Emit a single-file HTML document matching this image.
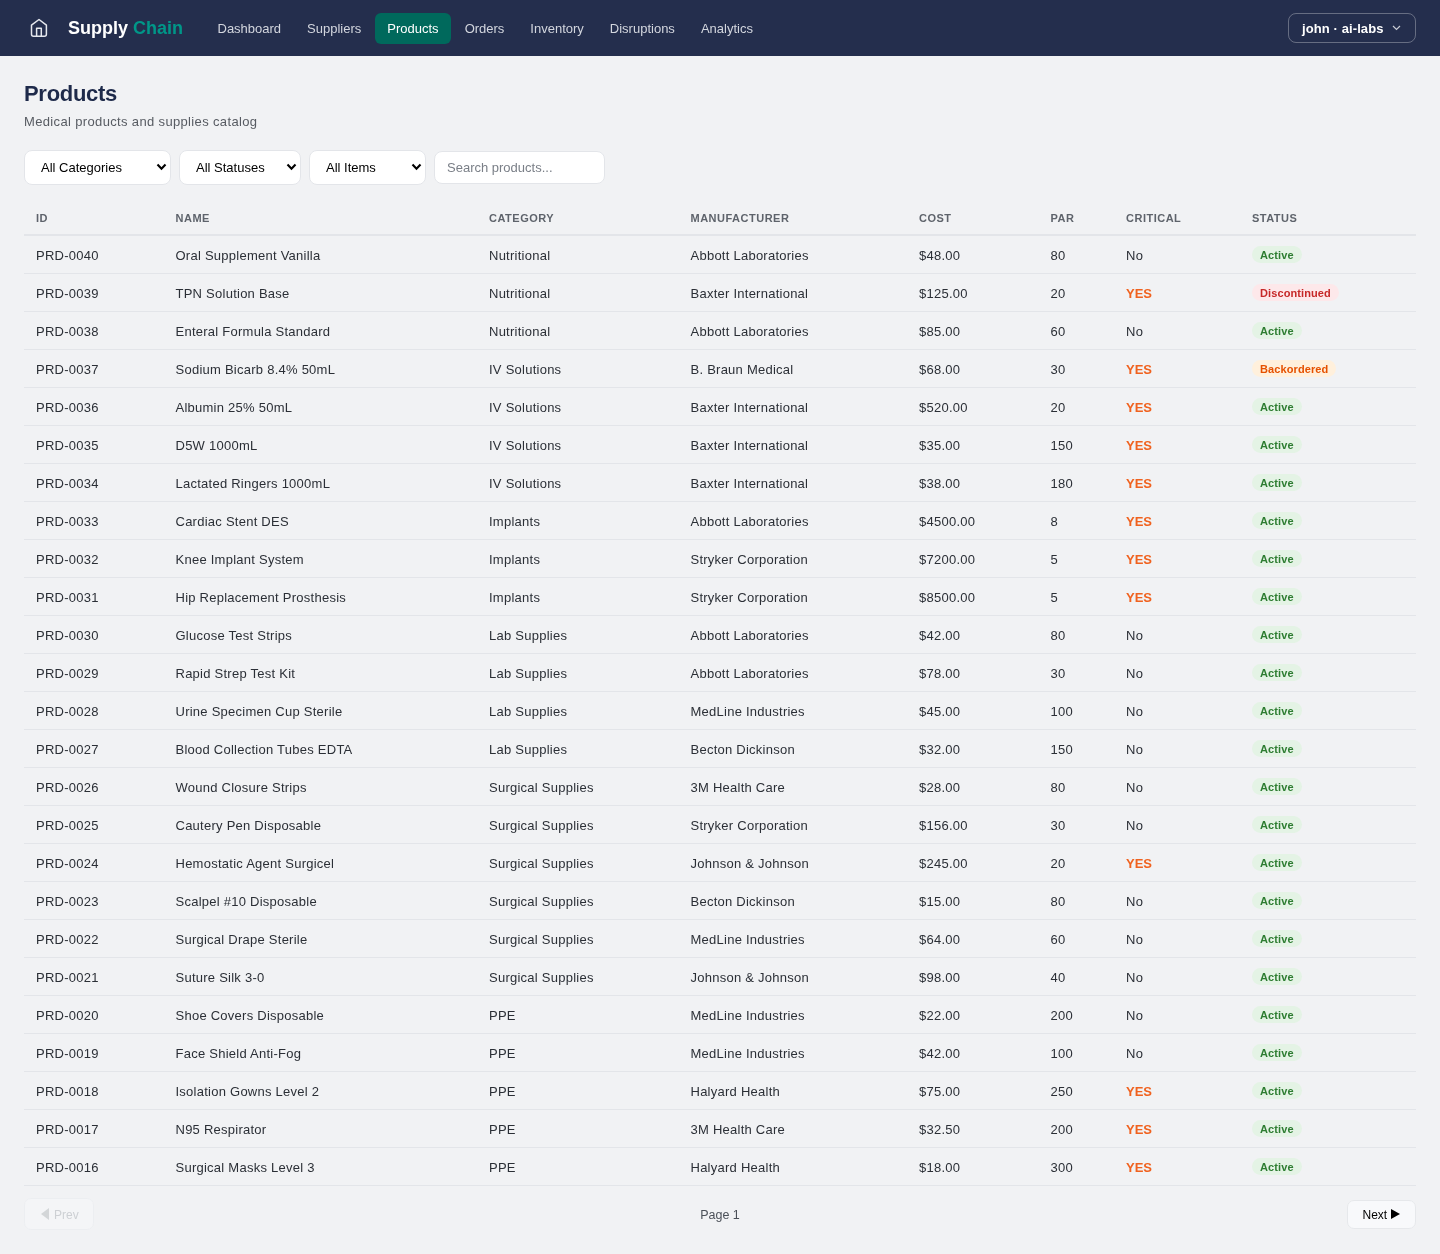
<!DOCTYPE html>
<html><head><meta charset="utf-8"><title>Products</title>
<style>
*{box-sizing:border-box;margin:0;padding:0}
html,body{width:1440px;height:1254px;overflow:hidden}
body{background:#f1f2f4;font-family:"Liberation Sans",sans-serif;color:#2b2f36;position:relative}
.nav{position:absolute;left:0;top:0;width:1440px;height:56px;background:#242e4d}
.home{position:absolute;left:26px;top:14px;width:26px;height:28px}
.logo{position:absolute;left:68px;top:17px;font-size:18px;font-weight:bold;color:#fff;line-height:22px;white-space:nowrap}
.logo span{color:#009688}
.links{position:absolute;left:205px;top:13px;display:flex;gap:1px}
.links a{display:block;height:31px;line-height:31px;padding:0 12.5px;font-size:13px;color:#d3d6de;text-decoration:none;border-radius:6px;white-space:nowrap}
.links a.on{background:#00695c;color:#fff}
.user{position:absolute;left:1288px;top:13px;width:128px;height:30px;border:1px solid rgba(255,255,255,0.3);border-radius:8px;color:#fff;font-size:13px;font-weight:bold;line-height:29px;padding-left:13px;letter-spacing:0.1px;white-space:nowrap}
.user svg{position:absolute;left:102.5px;top:11px}
h1{position:absolute;left:24px;top:81px;font-size:22px;line-height:26px;color:#1e2a4a;font-weight:bold;letter-spacing:-0.3px}
.sub{position:absolute;left:24px;top:114px;font-size:13px;line-height:16px;color:#575b62;letter-spacing:0.35px;white-space:nowrap}
.sel{position:absolute;top:150px;height:35px;background:#fff;border:1px solid #e3e5e9;border-radius:8px;font-size:13px;color:#000;line-height:33px;padding-left:16px;white-space:nowrap}
.sel svg{position:absolute;right:3.5px;top:12px}
.search{position:absolute;left:434px;top:151px;width:171px;height:33px;background:#fff;border:1px solid #e3e5e9;border-radius:8px;font-size:13px;color:#7a7f87;line-height:31px;padding-left:12px;white-space:nowrap}
table{position:absolute;left:24px;top:199px;width:1392px;border-collapse:collapse;table-layout:fixed}
th{height:36px;border-bottom:2px solid #e3e5e9;text-align:left;padding:3px 12px 0;font-size:11px;font-weight:bold;letter-spacing:0.5px;color:#5e636b;line-height:32px;white-space:nowrap}
td{height:38px;border-bottom:1px solid #e3e5e9;padding:2px 12px 0;font-size:13px;letter-spacing:0.25px;color:#2b2f36;line-height:35px;white-space:nowrap}
.yes{color:#f0621f;font-weight:bold;letter-spacing:0}
.badge{display:inline-block;height:17px;line-height:17px;padding:0 8px;border-radius:9px;font-size:11px;font-weight:bold;letter-spacing:0.1px;vertical-align:middle;position:relative;top:-2px;line-height:19px}
.b-act{background:#e4f3e5;color:#2e7d32}
.b-dis{background:#fde8ea;color:#c62828}
.b-bo{background:#fff0dc;color:#e65100}
.prev{position:absolute;left:24px;top:1198px;width:70px;height:32px;border:1px solid #eceef1;background:#f4f5f7;border-radius:7px;font-size:12px;color:#cdd0d4;line-height:30px;white-space:nowrap}
.next{position:absolute;left:1347px;top:1200px;width:69px;height:29px;border:1px solid #e6e8eb;background:#f8f9fb;border-radius:7px;font-size:12px;color:#000;line-height:27px;white-space:nowrap}
.page{position:absolute;left:0;width:1440px;top:1207px;text-align:center;font-size:12.5px;line-height:16px;color:#4b5058}
</style></head><body><div style="will-change:transform;position:absolute;left:0;top:0;width:1440px;height:1254px">
<div class="nav">
  <svg class="home" viewBox="26 14 26 28" width="26" height="28"><path d="M31.5 25.2 V34.2 Q31.5 36.2 33.5 36.2 H44.4 Q46.4 36.2 46.4 34.2 V25.2 L39 19.5 Z" fill="none" stroke="#e6e8ee" stroke-width="1.5" stroke-linejoin="round"/><path d="M36.6 36.2 V28.2 H41.3 V36.2" fill="none" stroke="#e6e8ee" stroke-width="1.5" stroke-linejoin="round"/></svg>
  <div class="logo">Supply <span>Chain</span></div>
  <div class="links"><a>Dashboard</a><a>Suppliers</a><a class="on">Products</a><a>Orders</a><a>Inventory</a><a>Disruptions</a><a>Analytics</a></div>
  <div class="user">john · ai-labs<svg width="10" height="6" viewBox="0 0 10 6"><path d="M1 1 L4.5 4.5 L8 1" fill="none" stroke="#c9ccd4" stroke-width="1.2"/></svg></div>
</div>
<h1>Products</h1>
<div class="sub">Medical products and supplies catalog</div>
<div class="sel" style="left:24px;width:147px">All Categories<svg width="11" height="8" viewBox="0 0 11 8"><path d="M1.5 1.5 L5.5 5.7 L9.5 1.5" fill="none" stroke="#000" stroke-width="2.1"/></svg></div>
<div class="sel" style="left:179px;width:122px">All Statuses<svg width="11" height="8" viewBox="0 0 11 8"><path d="M1.5 1.5 L5.5 5.7 L9.5 1.5" fill="none" stroke="#000" stroke-width="2.1"/></svg></div>
<div class="sel" style="left:309px;width:117px">All Items<svg width="11" height="8" viewBox="0 0 11 8"><path d="M1.5 1.5 L5.5 5.7 L9.5 1.5" fill="none" stroke="#000" stroke-width="2.1"/></svg></div>
<div class="search">Search products...</div>
<table>
<colgroup><col style="width:139.5px"><col style="width:313.5px"><col style="width:201.5px"><col style="width:228.5px"><col style="width:131.5px"><col style="width:75.5px"><col style="width:126px"><col style="width:176px"></colgroup>
<thead><tr><th>ID</th><th>NAME</th><th>CATEGORY</th><th>MANUFACTURER</th><th>COST</th><th>PAR</th><th>CRITICAL</th><th>STATUS</th></tr></thead>
<tbody>
<tr><td>PRD-0040</td><td>Oral Supplement Vanilla</td><td>Nutritional</td><td>Abbott Laboratories</td><td>$48.00</td><td>80</td><td>No</td><td><span class="badge b-act">Active</span></td></tr>
<tr><td>PRD-0039</td><td>TPN Solution Base</td><td>Nutritional</td><td>Baxter International</td><td>$125.00</td><td>20</td><td><span class="yes">YES</span></td><td><span class="badge b-dis">Discontinued</span></td></tr>
<tr><td>PRD-0038</td><td>Enteral Formula Standard</td><td>Nutritional</td><td>Abbott Laboratories</td><td>$85.00</td><td>60</td><td>No</td><td><span class="badge b-act">Active</span></td></tr>
<tr><td>PRD-0037</td><td>Sodium Bicarb 8.4% 50mL</td><td>IV Solutions</td><td>B. Braun Medical</td><td>$68.00</td><td>30</td><td><span class="yes">YES</span></td><td><span class="badge b-bo">Backordered</span></td></tr>
<tr><td>PRD-0036</td><td>Albumin 25% 50mL</td><td>IV Solutions</td><td>Baxter International</td><td>$520.00</td><td>20</td><td><span class="yes">YES</span></td><td><span class="badge b-act">Active</span></td></tr>
<tr><td>PRD-0035</td><td>D5W 1000mL</td><td>IV Solutions</td><td>Baxter International</td><td>$35.00</td><td>150</td><td><span class="yes">YES</span></td><td><span class="badge b-act">Active</span></td></tr>
<tr><td>PRD-0034</td><td>Lactated Ringers 1000mL</td><td>IV Solutions</td><td>Baxter International</td><td>$38.00</td><td>180</td><td><span class="yes">YES</span></td><td><span class="badge b-act">Active</span></td></tr>
<tr><td>PRD-0033</td><td>Cardiac Stent DES</td><td>Implants</td><td>Abbott Laboratories</td><td>$4500.00</td><td>8</td><td><span class="yes">YES</span></td><td><span class="badge b-act">Active</span></td></tr>
<tr><td>PRD-0032</td><td>Knee Implant System</td><td>Implants</td><td>Stryker Corporation</td><td>$7200.00</td><td>5</td><td><span class="yes">YES</span></td><td><span class="badge b-act">Active</span></td></tr>
<tr><td>PRD-0031</td><td>Hip Replacement Prosthesis</td><td>Implants</td><td>Stryker Corporation</td><td>$8500.00</td><td>5</td><td><span class="yes">YES</span></td><td><span class="badge b-act">Active</span></td></tr>
<tr><td>PRD-0030</td><td>Glucose Test Strips</td><td>Lab Supplies</td><td>Abbott Laboratories</td><td>$42.00</td><td>80</td><td>No</td><td><span class="badge b-act">Active</span></td></tr>
<tr><td>PRD-0029</td><td>Rapid Strep Test Kit</td><td>Lab Supplies</td><td>Abbott Laboratories</td><td>$78.00</td><td>30</td><td>No</td><td><span class="badge b-act">Active</span></td></tr>
<tr><td>PRD-0028</td><td>Urine Specimen Cup Sterile</td><td>Lab Supplies</td><td>MedLine Industries</td><td>$45.00</td><td>100</td><td>No</td><td><span class="badge b-act">Active</span></td></tr>
<tr><td>PRD-0027</td><td>Blood Collection Tubes EDTA</td><td>Lab Supplies</td><td>Becton Dickinson</td><td>$32.00</td><td>150</td><td>No</td><td><span class="badge b-act">Active</span></td></tr>
<tr><td>PRD-0026</td><td>Wound Closure Strips</td><td>Surgical Supplies</td><td>3M Health Care</td><td>$28.00</td><td>80</td><td>No</td><td><span class="badge b-act">Active</span></td></tr>
<tr><td>PRD-0025</td><td>Cautery Pen Disposable</td><td>Surgical Supplies</td><td>Stryker Corporation</td><td>$156.00</td><td>30</td><td>No</td><td><span class="badge b-act">Active</span></td></tr>
<tr><td>PRD-0024</td><td>Hemostatic Agent Surgicel</td><td>Surgical Supplies</td><td>Johnson &amp; Johnson</td><td>$245.00</td><td>20</td><td><span class="yes">YES</span></td><td><span class="badge b-act">Active</span></td></tr>
<tr><td>PRD-0023</td><td>Scalpel #10 Disposable</td><td>Surgical Supplies</td><td>Becton Dickinson</td><td>$15.00</td><td>80</td><td>No</td><td><span class="badge b-act">Active</span></td></tr>
<tr><td>PRD-0022</td><td>Surgical Drape Sterile</td><td>Surgical Supplies</td><td>MedLine Industries</td><td>$64.00</td><td>60</td><td>No</td><td><span class="badge b-act">Active</span></td></tr>
<tr><td>PRD-0021</td><td>Suture Silk 3-0</td><td>Surgical Supplies</td><td>Johnson &amp; Johnson</td><td>$98.00</td><td>40</td><td>No</td><td><span class="badge b-act">Active</span></td></tr>
<tr><td>PRD-0020</td><td>Shoe Covers Disposable</td><td>PPE</td><td>MedLine Industries</td><td>$22.00</td><td>200</td><td>No</td><td><span class="badge b-act">Active</span></td></tr>
<tr><td>PRD-0019</td><td>Face Shield Anti-Fog</td><td>PPE</td><td>MedLine Industries</td><td>$42.00</td><td>100</td><td>No</td><td><span class="badge b-act">Active</span></td></tr>
<tr><td>PRD-0018</td><td>Isolation Gowns Level 2</td><td>PPE</td><td>Halyard Health</td><td>$75.00</td><td>250</td><td><span class="yes">YES</span></td><td><span class="badge b-act">Active</span></td></tr>
<tr><td>PRD-0017</td><td>N95 Respirator</td><td>PPE</td><td>3M Health Care</td><td>$32.50</td><td>200</td><td><span class="yes">YES</span></td><td><span class="badge b-act">Active</span></td></tr>
<tr><td>PRD-0016</td><td>Surgical Masks Level 3</td><td>PPE</td><td>Halyard Health</td><td>$18.00</td><td>300</td><td><span class="yes">YES</span></td><td><span class="badge b-act">Active</span></td></tr>
</tbody></table>
<div class="prev"><span style="position:absolute;left:15.5px;top:9px;width:0;height:0;border-top:6px solid transparent;border-bottom:6px solid transparent;border-right:8.5px solid #d3d6d8"></span><span style="position:absolute;left:29px;top:1px">Prev</span></div>
<div class="page">Page 1</div>
<div class="next"><span style="position:absolute;left:14.5px;top:1px">Next</span><span style="position:absolute;left:43px;top:8px;width:0;height:0;border-top:5.5px solid transparent;border-bottom:5.5px solid transparent;border-left:9px solid #000"></span></div>
</div></body></html>
